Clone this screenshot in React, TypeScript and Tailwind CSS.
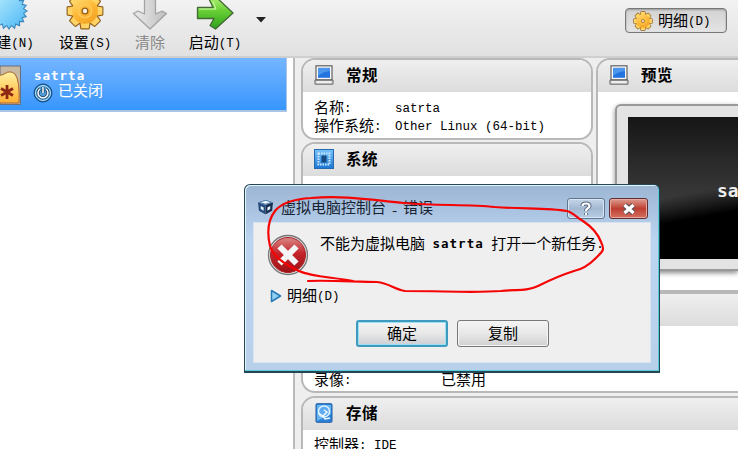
import React from "react";

const L = ({ children, bold = false }: { children: React.ReactNode; bold?: boolean }) => (
  <span
    className={
      "relative -top-px whitespace-pre " +
      (bold
        ? "font-['DejaVu_Sans_Mono','Liberation_Mono',monospace] text-[12.5px] font-bold tracking-[1px]"
        : "font-['Liberation_Mono',monospace] text-[12.5px]")
    }
  >
    {children}
  </span>
);

const Gear = ({ size, id }: { size: number; id: string }) => (
  <svg width={size} height={size} viewBox="-20 -20 40 40" className="shrink-0">
    <defs>
      <linearGradient id={id} gradientUnits="userSpaceOnUse" x1="-10" y1="-18" x2="10" y2="18">
        <stop offset="0" stopColor="#ffe27f" />
        <stop offset="0.5" stopColor="#fdb734" />
        <stop offset="1" stopColor="#ef9a1c" />
      </linearGradient>
    </defs>
    <g stroke="#93601c" strokeWidth="2.4" strokeLinejoin="round">
      {[0, 45, 90, 135, 180, 225, 270, 315].map((a) => (
        <path key={a} d="M-5 -11L-3.8 -18.2H3.8L5 -11Z" transform={`rotate(${a})`} />
      ))}
      <circle r="13.5" />
    </g>
    <g fill={`url(#${id})`}>
      {[0, 45, 90, 135, 180, 225, 270, 315].map((a) => (
        <path key={a} d="M-5 -11L-3.8 -18.2H3.8L5 -11Z" transform={`rotate(${a})`} />
      ))}
      <circle r="13.5" />
    </g>
    <circle r="7" fill="none" stroke="#ffca5c" strokeWidth="1.5" />
    <circle r="3" fill="#f7efe0" stroke="#93601c" strokeWidth="1.4" />
  </svg>
);

const starPoints = Array.from({ length: 40 }, (_, i) => {
  const r = i % 2 ? 15.5 : 19;
  const a = (i * Math.PI) / 20;
  return `${(Math.cos(a) * r).toFixed(2)},${(Math.sin(a) * r).toFixed(2)}`;
}).join(" ");

const NewIcon = () => (
  <svg width="38" height="38" viewBox="-20 -20 40 40" className="ml-[2px]">
    <defs>
      <linearGradient id="new" x1="0" y1="0" x2="1" y2="1">
        <stop stopColor="#bdf0ff" />
        <stop offset="1" stopColor="#48b5f4" />
      </linearGradient>
    </defs>
    <polygon points={starPoints} fill="url(#new)" stroke="#3c88be" strokeWidth="1.2" />
  </svg>
);

const DownArrow = () => (
  <svg width="36" height="38" viewBox="0 0 36 38">
    <defs>
      <linearGradient id="down" x1="0" y1="0" x2="1" y2="0">
        <stop stopColor="#ededed" />
        <stop offset="1" stopColor="#bdbdbd" />
      </linearGradient>
    </defs>
    <path d="M12.5 2H23.500V22L30 19L34.500 21.500L18 37L1.500 21.500L6 19L12.500 22Z" fill="url(#down)" stroke="#a3a3a3" strokeWidth="1.300" strokeLinejoin="round" />
  </svg>
);

const RightArrow = () => (
  <svg width="38" height="38" viewBox="0 0 38 38">
    <defs>
      <linearGradient id="right" x1="0" y1="0" x2="0" y2="1">
        <stop stopColor="#b4f27b" />
        <stop offset="0.45" stopColor="#68cf35" />
        <stop offset="1" stopColor="#2f9f1d" />
      </linearGradient>
    </defs>
    <path d="M1.500 15.500H17L13.500 8L19 4L37 21L19.500 37L14 33.500L18 26.500H1.500Z" fill="url(#right)" stroke="#426934" strokeWidth="1.300" strokeLinejoin="round" />
    <path d="M3 17H20L17 9.500" fill="none" stroke="#d4ffad" strokeWidth="1" />
  </svg>
);

const Monitor = () => (
  <svg width="20" height="20" viewBox="0 0 20 20" className="shrink-0">
    <path d="M1 15H19V19.200H1Z" fill="#ddd" stroke="#646464" />
    <rect x="2" y="0.800" width="16" height="14" fill="#f8f8f8" stroke="#606060" strokeWidth="1.200" />
    <rect x="4" y="2.800" width="12" height="10" fill="#2474df" />
    <path d="M4 3H16V6Q8 7 4 11Z" fill="#4c97ec" />
    <path d="M3 17H17" stroke="#fff" />
  </svg>
);

const Chip = () => (
  <svg width="20" height="20" viewBox="0 0 20 20" className="shrink-0">
    <defs>
      <linearGradient id="chip" x1="0" y1="0" x2="0" y2="1">
        <stop stopColor="#78c4fb" />
        <stop offset="1" stopColor="#1c76d3" />
      </linearGradient>
    </defs>
    <rect x="0.500" y="0.500" width="19" height="19" fill="url(#chip)" stroke="#2668ad" />
    <rect x="4.500" y="4.500" width="11" height="11" fill="none" stroke="#cbeaff" strokeWidth="2" strokeDasharray="1.500 1" />
    <rect x="7.500" y="6.500" width="5" height="7" fill="#154a80" />
  </svg>
);

const Disk = () => (
  <svg width="20" height="20" viewBox="0 0 20 20" className="shrink-0">
    <rect x="2" y="0.700" width="16" height="18.600" rx="1" fill="#2c83d8" stroke="#225fa7" />
    <path d="M3 2H17V11L3 18Z" fill="#68b4f0" />
    <circle cx="10" cy="8.500" r="5.500" fill="#5faaf0" stroke="#dff3ff" strokeWidth="1.400" />
    <path d="M4.500 10L9 13L13 9L10 7M9 13L11 16L16 15" fill="none" stroke="#eefaff" strokeWidth="1.500" />
  </svg>
);

const ToolItem = ({ icon, children, muted = false }: { icon: React.ReactNode; children: React.ReactNode; muted?: boolean }) => (
  <div className={"flex w-[54px] shrink-0 flex-col items-center " + (muted ? "text-[#888]" : "text-black")}>
    <div className="-mt-2 flex h-[39px] items-start">{icon}</div>
    <div className="mt-[5px] h-[18px] whitespace-nowrap leading-[18px]">{children}</div>
  </div>
);

const Header = ({ icon, title }: { icon: React.ReactNode; title: string }) => (
  <div className="flex h-8 shrink-0 items-start gap-3 bg-gradient-to-b from-[#efefef] to-[#dcdcdc] pl-[11px] pt-[5px]">
    {icon}
    <b className="mt-[2px] text-[15.5px] leading-5 tracking-[0.5px]">{title}</b>
  </div>
);

export default function App() {
  return (
    <div className="relative flex h-[449px] w-[738px] flex-col overflow-hidden bg-white font-['Liberation_Mono','Noto_Sans_CJK_SC',sans-serif] text-[15px] text-black">
      <header className="flex h-[58px] shrink-0 border-b-2 border-[#cfcfcf] bg-gradient-to-b from-[#f2f2f2] to-[#e1e1e1]">
        <div className="-ml-[19px] flex">
          <ToolItem icon={<NewIcon />}><span className="ml-[14px]">建<L>(N)</L></span></ToolItem>
          <div className="w-[23px]" />
          <ToolItem icon={<Gear size={38} id="gear-large" />}>设置<L>(S)</L></ToolItem>
          <div className="w-[11px]" />
          <ToolItem icon={<DownArrow />} muted>清除</ToolItem>
          <div className="w-[11px]" />
          <ToolItem icon={<RightArrow />}>启动<L>(T)</L></ToolItem>
        </div>
        <svg width="10" height="6" className="ml-[14px] mt-[17px]"><path d="M0 0H10L5 5.500Z" fill="#222" /></svg>
        <div className="ml-auto mr-[11px] mt-2 flex h-[25px] w-[102px] items-center gap-[5px] rounded-[4px] border border-[#777] bg-gradient-to-b from-[#d2d2d2] to-[#e4e4e4] pl-[7px] shadow-[inset_0_1px_2px_#999]">
          <Gear size={20} id="gear-small" />
          <span className="mt-[5px] whitespace-nowrap leading-5">明细<L>(D)</L></span>
        </div>
      </header>

      <div className="flex min-h-0 flex-1">
        <aside className="w-[293px] shrink-0">
          <div className="flex h-[54px] w-[287px] border-b-2 border-r border-[#a9c5e6] bg-gradient-to-b from-[#74b5ff] to-[#3596fd]">
            <svg width="22" height="42" viewBox="0 0 22 42" className="mt-[7px] shrink-0">
              <defs>
                <linearGradient id="os" x1="0" y1="0" x2="0" y2="1">
                  <stop stopColor="#fff2a2" />
                  <stop offset="1" stopColor="#ffae32" />
                </linearGradient>
              </defs>
              <path d="M0 1H20.500V39.500H0Z" fill="#c8b9a3" stroke="#696f7b" />
              <path d="M-2 10Q2 11 5 8.500Q10 5 15 9Q20 15 19 38H-2Z" fill="url(#os)" stroke="#a4632e" />
              <path d="M7 20V34M1 23.500L13 30.500M13 23.500L1 30.500" stroke="#8d2815" strokeWidth="2.800" />
            </svg>
            <div className="ml-[12px] pt-[11px] text-white">
              <div className="h-[15px] leading-[15px]"><L bold>satrta</L></div>
              <div className="-ml-px -mt-px flex h-[19px] items-center gap-[5px]">
                <svg width="20" height="20" viewBox="0 0 20 20">
                  <circle cx="10" cy="10" r="9" fill="#1e6eaf" stroke="#164c7c" />
                  <circle cx="10" cy="10" r="7.500" fill="#4f9bd3" stroke="#bde8ff" />
                  <path d="M7 6A5 5 0 1 0 13 6M10 4V10" fill="none" stroke="#123c66" strokeWidth="3" />
                  <path d="M7 6A5 5 0 1 0 13 6M10 4V10" fill="none" stroke="#fff" strokeWidth="1.500" />
                </svg>
                <span className="leading-[18px]">已关闭</span>
              </div>
            </div>
          </div>
        </aside>

        <main className="flex min-w-0 flex-1 flex-col border-l-2 border-[#b9b9b9] bg-[#eeeeee] pl-[6px]">
          <div className="flex h-[234px] shrink-0 gap-[3px]">
            <div className="flex w-[292px] shrink-0 flex-col gap-[2px]">
              <section className="h-[82px] overflow-hidden rounded-[14px] border-2 border-[#b8b8b8] bg-white">
                <Header icon={<Monitor />} title="常规" />
                <div className="grid grid-cols-[81px_1fr] pl-[11px] pt-[9px] leading-[18px]">
                  <span>名称<L>:</L></span><L>satrta</L>
                  <span>操作系统<L>:</L></span><L>Other Linux (64-bit)</L>
                </div>
              </section>
              <section className="h-[150px] overflow-hidden rounded-[14px] border-2 border-[#b8b8b8] bg-white">
                <Header icon={<Chip />} title="系统" />
              </section>
            </div>
            <section className="min-w-0 flex-1 overflow-hidden rounded-l-[14px] border-2 border-r-0 border-[#b8b8b8] bg-white">
              <Header icon={<Monitor />} title="预览" />
              <div className="ml-[17px] mt-[12px] h-[167px] rounded-l-[6px] border-2 border-r-0 border-[#999] bg-[#e3e3e3] pb-[10px] pl-[11px] pt-[11px] shadow-[0_2px_5px_#888]">
                <div className="h-full overflow-hidden bg-gradient-to-b from-[#161616] via-[#2c2c2c] via-35% to-[#525252]">
                  <div className="flex h-full items-center justify-end bg-[linear-gradient(170deg,transparent_54%,#000_70%)]">
                    <b className="-mr-[44px] mt-[5px] font-['DejaVu_Sans_Mono',monospace] text-[18px] leading-5 text-[#eee]">satrta</b>
                  </div>
                </div>
              </div>
            </section>
          </div>
          <section className="h-[101px] shrink-0 overflow-hidden rounded-l-[14px] border-2 border-r-0 border-[#b8b8b8] bg-white">
            <Header icon={<Monitor />} title="显示" />
            <div className="grid grid-cols-[127px_1fr] pl-[11px] pt-[47px] leading-[18px]">
              <span>录像<L>:</L></span><span>已禁用</span>
            </div>
          </section>
          <section className="mt-[3px] h-[80px] shrink-0 overflow-hidden rounded-tl-[14px] border-2 border-r-0 border-[#b8b8b8] bg-white">
            <Header icon={<Disk />} title="存储" />
            <div className="pl-[11px] pt-[8px] leading-[18px]">控制器<L>: IDE</L></div>
          </section>
        </main>
      </div>

      <div className="absolute left-[244px] top-[184px] flex h-[189px] w-[416px] flex-col rounded-t-[6px] border border-b-2 border-[#254652] bg-gradient-to-b from-[#9bb5d3] via-[#bbd5f1] via-30% to-[#b9d0ea] px-[8px] pb-[8px] shadow-[inset_-1px_-1px_#55cddd,inset_1px_1px_#e2f4ff]">
        <div className="flex h-[37px] shrink-0 items-center">
          <svg width="17" height="18" viewBox="0 0 18 18" className="ml-[4px] mt-[7px] shrink-0">
            <path d="M9 .5L17 4L16 13L9 17.500L2 13L1 4Z" fill="#d5e2f0" />
            <path d="M1 4L9 7V17L2 13Z" fill="#244c7c" />
            <path d="M17 4L9 7V17L16 13Z" fill="#162f52" />
            <path d="M1 4L9 1L17 4L9 7Z" fill="#507ba8" />
            <path d="M4 4L9 2.500L14 4L9 5.500Z M4 8L7 9.500V13L4 11Z M14 8L11 9.500V13L14 11Z" fill="#e8f4ff" />
          </svg>
          <span className="ml-[7px] mt-[13px] flex whitespace-pre text-[15px] leading-5 text-[#182332]">虚拟电脑控制台<span className="w-[17px] text-center font-['Noto_Sans_CJK_SC',sans-serif]">-</span>错误</span>
          <div className="ml-auto mr-[3px] mt-[10px] flex gap-1">
            <div className="flex h-[21px] w-[38px] items-center justify-center rounded-[3px] border border-[#60758e] bg-gradient-to-b from-[#c5d5e7] via-[#a3b9d2] to-[#b5cde5] shadow-[inset_0_0_0_1px_#d9e7f4]">
              <svg width="14" height="16" viewBox="0 0 14 16">
                <path d="M3.500 5Q3.500 2.500 7 2.500T10.500 5Q10.500 6.500 8.500 7.500Q7 8.500 7 10M7 12V14" fill="none" stroke="#53647b" strokeWidth="4" />
                <path d="M3.500 5Q3.500 2.500 7 2.500T10.500 5Q10.500 6.500 8.500 7.500Q7 8.500 7 10M7 12V14" fill="none" stroke="#fff" strokeWidth="2.200" />
              </svg>
            </div>
            <div className="flex h-[21px] w-[39px] items-center justify-center rounded-[3px] border border-[#632c31] bg-gradient-to-b from-[#dc9b90] via-[#bd3d31] to-[#d47061] shadow-[inset_0_0_0_1px_#e7a89f]">
              <svg width="16" height="14" viewBox="0 0 16 14">
                <path d="M3.500 3L12.500 11M12.500 3L3.500 11" stroke="#5c4c54" strokeWidth="5.500" />
                <path d="M3.500 3L12.500 11M12.500 3L3.500 11" stroke="#fff" strokeWidth="3.300" />
              </svg>
            </div>
          </div>
        </div>
        <div className="flex flex-1 flex-col border border-[#d8e2f1] bg-[#efefef] px-[13px]">
          <div className="flex pt-[11px]">
            <svg width="42" height="42" viewBox="0 0 42 42" className="shrink-0">
              <defs>
                <linearGradient id="error" x1="0" y1="0" x2="0" y2="1">
                  <stop stopColor="#d98a86" />
                  <stop offset="0.45" stopColor="#c4242a" />
                  <stop offset="1" stopColor="#9b1116" />
                </linearGradient>
              </defs>
              <circle cx="21" cy="21" r="19.500" fill="#e2e2e2" stroke="#777" strokeWidth="1.300" />
              <circle cx="21" cy="21" r="17.500" fill="url(#error)" stroke="#a92225" />
              <path d="M12.500 12.500L29.500 29.500M29.500 12.500L12.500 29.500" stroke="#f5f5f5" strokeWidth="6" />
            </svg>
            <p className="ml-[11px] mt-px whitespace-nowrap leading-[20px]">不能为虚拟电脑<L> </L><L bold>satrta</L><L> </L>打开一个新任务<L>.</L></p>
          </div>
          <div className="mt-[10px] flex h-[20px] items-center gap-[5px]">
            <svg width="12" height="14" viewBox="0 0 12 14" className="ml-[3px]">
              <path d="M1.500 1.500L10.500 7L1.500 12.500Z" fill="#93d0f4" stroke="#2478b5" strokeWidth="1.500" strokeLinejoin="round" />
            </svg>
            <span className="mt-[4px] leading-5">明细<L>(D)</L></span>
          </div>
          <div className="ml-[89px] mt-[14px] flex gap-[9px]">
            <button className="h-[27px] w-[92px] rounded-[3px] border-2 border-[#3e9bbf] bg-gradient-to-b from-[#f4f4f4] via-[#e8e8e8] to-[#cbcfd3] pt-[4px] leading-5 shadow-[inset_0_0_0_1px_#9be0f5]">确定</button>
            <button className="h-[27px] w-[92px] rounded-[3px] border border-[#777] bg-gradient-to-b from-[#f4f4f4] via-[#e8e8e8] to-[#d0d0d0] pt-[4px] leading-5 shadow-[inset_0_0_0_1px_#f5f5f5]">复制</button>
          </div>
        </div>
      </div>

      <svg className="pointer-events-none absolute left-0 top-0" width="738" height="449" viewBox="0 0 738 449">
        <path d="M353 281C332 277 312 277 299 271C288 266 273 257 270 246C267 233 268 220 275 211C282 202 296 199 311 198C343 195 372 200 404 203C438 206 467 204 495 207C522 209 549 208 567 211C574 213 577 218 583 221C592 227 598 234 601 242C605 250 603 251 596 258C590 264 584 269 574 271C558 276 548 281 538 286C525 292 517 289 501 291C474 293 445 291 405 291C395 290 389 283 377 282C358 282 329 280 308 281" fill="none" stroke="#f60404" strokeWidth="2.2" strokeLinecap="round" strokeLinejoin="round" />
      </svg>
    </div>
  );
}
